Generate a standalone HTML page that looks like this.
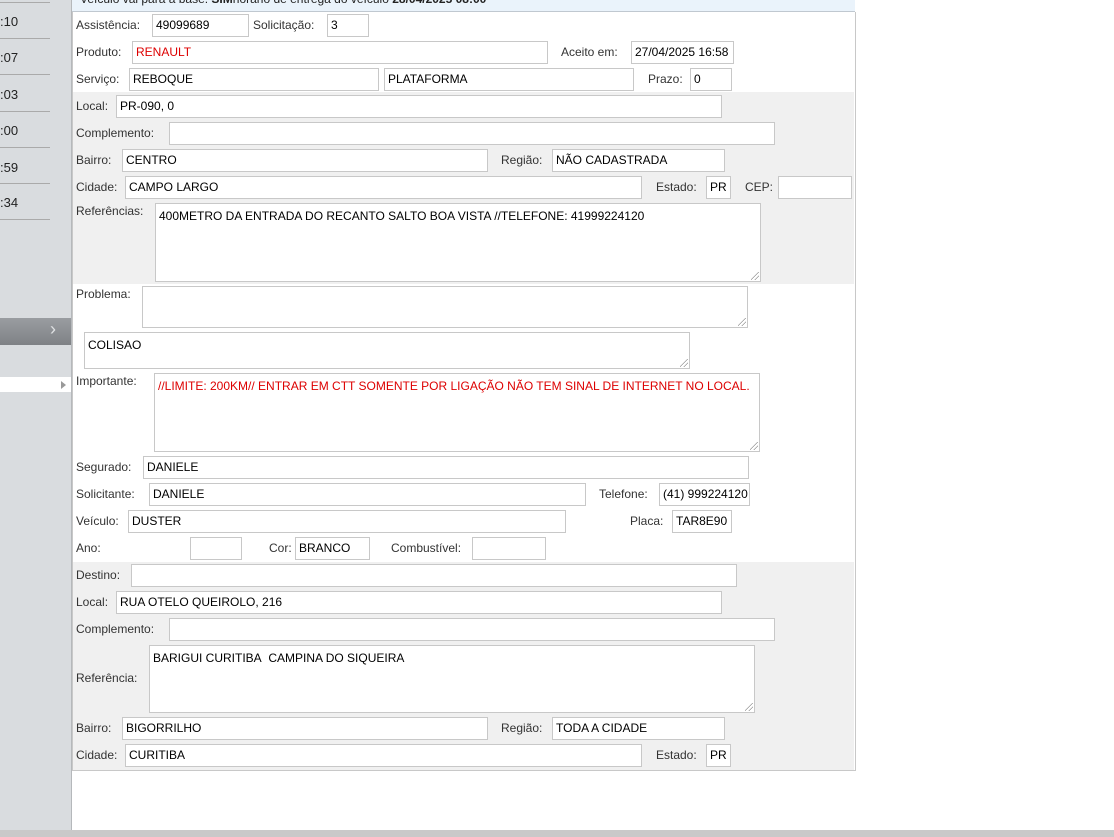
<!DOCTYPE html><html><head><meta charset="utf-8"><style>
body{margin:0;width:1114px;height:837px;position:relative;overflow:hidden;background:#fff;font-family:"Liberation Sans",sans-serif;font-size:12px;color:#333}
.a{position:absolute;white-space:nowrap}
.l{position:absolute;white-space:nowrap;line-height:14px;color:#333}
.i{position:absolute;background:#fff;border:1px solid #c8c8c8;box-sizing:border-box;color:#000;padding:3px 3px;line-height:14px;white-space:nowrap;overflow:hidden}
.t{white-space:normal;padding:5px 3px}
.sep{position:absolute;left:0;width:50px;height:1px;background:#aaa}
.tm{position:absolute;left:0;font-size:13px;color:#222}
.grip{position:absolute;width:8px;height:8px;right:1px;bottom:1px;background:linear-gradient(135deg,transparent 45%,#999 46%,#999 52%,transparent 53%,transparent 70%,#999 71%,#999 77%,transparent 78%)}
</style></head><body>
<div class="a" style="left:0;top:0;width:71px;height:830px;background:#d9dcdf;border-right:1px solid #b5b8bb"></div>
<div class="sep" style="top:2px"></div><div class="sep" style="top:38px"></div><div class="sep" style="top:74px"></div><div class="sep" style="top:111px"></div><div class="sep" style="top:147px"></div><div class="sep" style="top:183px"></div><div class="sep" style="top:219px"></div>
<div class="tm" style="top:14px">:10</div><div class="tm" style="top:50px">:07</div><div class="tm" style="top:87px">:03</div><div class="tm" style="top:123px">:00</div><div class="tm" style="top:160px">:59</div><div class="tm" style="top:195px">:34</div>
<div class="a" style="left:0;top:318px;width:71px;height:27px;background:linear-gradient(#9a9da1,#7e8185)"></div>
<div class="a" style="left:50px;top:319px;color:#dfe1e3;font-size:18px">›</div>
<div class="a" style="left:0;top:377px;width:71px;height:15px;background:#fff"></div>
<div class="a" style="left:61px;top:381px;width:0;height:0;border-left:5px solid #999;border-top:4px solid transparent;border-bottom:4px solid transparent"></div>
<div class="a" style="left:0;top:830px;width:1114px;height:7px;background:#c9c9c9"></div>

<div class="a" style="left:72px;top:0;width:783px;height:11px;background:#eaf3fb;border-bottom:1px solid #c0c8d0;overflow:hidden"><div style="position:absolute;left:8px;top:-8px;font-size:12px;color:#222">Veículo vai para a base: <b>SIM</b>horário de entrega do veículo <b>28/04/2025 08:00</b></div></div>
<div class="a" style="left:72px;top:12px;width:782px;height:758px;border:1px solid #c8c8c8;border-top:none;box-sizing:content-box;background:#fff"></div>
<div class="a" style="left:73px;top:92px;width:781px;height:192px;background:#f0f0f0"></div>
<div class="a" style="left:73px;top:562px;width:781px;height:208px;background:#f0f0f0"></div>

<div class="l" style="left:76px;top:18px">Assistência:</div><div class="i" style="left:152px;top:14px;width:97px;height:23px">49099689</div>
<div class="l" style="left:253px;top:18px">Solicitação:</div><div class="i" style="left:327px;top:14px;width:42px;height:23px">3</div>
<div class="l" style="left:76px;top:45px">Produto:</div><div class="i" style="left:132px;top:41px;width:416px;height:23px;color:#d00">RENAULT</div>
<div class="l" style="left:561px;top:45px">Aceito em:</div><div class="i" style="left:631px;top:41px;width:103px;height:23px">27/04/2025 16:58</div>
<div class="l" style="left:76px;top:72px">Serviço:</div><div class="i" style="left:129px;top:68px;width:250px;height:23px">REBOQUE</div>
<div class="i" style="left:384px;top:68px;width:250px;height:23px">PLATAFORMA</div>
<div class="l" style="left:648px;top:72px">Prazo:</div><div class="i" style="left:690px;top:68px;width:42px;height:23px">0</div>

<div class="l" style="left:76px;top:99px">Local:</div><div class="i" style="left:116px;top:95px;width:606px;height:23px">PR-090, 0</div>
<div class="l" style="left:76px;top:126px">Complemento:</div><div class="i" style="left:169px;top:122px;width:606px;height:23px"></div>
<div class="l" style="left:76px;top:153px">Bairro:</div><div class="i" style="left:122px;top:149px;width:366px;height:23px">CENTRO</div>
<div class="l" style="left:501px;top:153px">Região:</div><div class="i" style="left:552px;top:149px;width:173px;height:23px">NÃO CADASTRADA</div>
<div class="l" style="left:76px;top:180px">Cidade:</div><div class="i" style="left:125px;top:176px;width:517px;height:23px">CAMPO LARGO</div>
<div class="l" style="left:656px;top:180px">Estado:</div><div class="i" style="left:706px;top:176px;width:25px;height:23px">PR</div>
<div class="l" style="left:745px;top:180px">CEP:</div><div class="i" style="left:778px;top:176px;width:74px;height:23px"></div>
<div class="l" style="left:76px;top:204px">Referências:</div><div class="i t" style="left:155px;top:203px;width:606px;height:79px">400METRO DA ENTRADA DO RECANTO SALTO BOA VISTA //TELEFONE: 41999224120<div class="grip"></div></div>

<div class="l" style="left:76px;top:287px">Problema:</div><div class="i t" style="left:142px;top:286px;width:606px;height:42px"><div class="grip"></div></div>
<div class="i t" style="left:84px;top:332px;width:606px;height:37px">COLISAO<div class="grip"></div></div>
<div class="l" style="left:76px;top:374px">Importante:</div><div class="i t" style="left:154px;top:373px;width:606px;height:79px;color:#d00">//LIMITE: 200KM// ENTRAR EM CTT SOMENTE POR LIGAÇÃO NÃO TEM SINAL DE INTERNET NO LOCAL.<div class="grip"></div></div>
<div class="l" style="left:76px;top:460px">Segurado:</div><div class="i" style="left:143px;top:456px;width:606px;height:23px">DANIELE</div>
<div class="l" style="left:76px;top:487px">Solicitante:</div><div class="i" style="left:149px;top:483px;width:437px;height:23px">DANIELE</div>
<div class="l" style="left:599px;top:487px">Telefone:</div><div class="i" style="left:659px;top:483px;width:91px;height:23px">(41) 999224120</div>
<div class="l" style="left:76px;top:514px">Veículo:</div><div class="i" style="left:128px;top:510px;width:438px;height:23px">DUSTER</div>
<div class="l" style="left:630px;top:514px">Placa:</div><div class="i" style="left:672px;top:510px;width:60px;height:23px">TAR8E90</div>
<div class="l" style="left:76px;top:541px">Ano:</div><div class="i" style="left:190px;top:537px;width:52px;height:23px"></div>
<div class="l" style="left:269px;top:541px">Cor:</div><div class="i" style="left:295px;top:537px;width:75px;height:23px">BRANCO</div>
<div class="l" style="left:391px;top:541px">Combustível:</div><div class="i" style="left:472px;top:537px;width:74px;height:23px"></div>

<div class="l" style="left:76px;top:568px">Destino:</div><div class="i" style="left:131px;top:564px;width:606px;height:23px"></div>
<div class="l" style="left:76px;top:595px">Local:</div><div class="i" style="left:116px;top:591px;width:606px;height:23px">RUA OTELO QUEIROLO, 216</div>
<div class="l" style="left:76px;top:622px">Complemento:</div><div class="i" style="left:169px;top:618px;width:606px;height:23px"></div>
<div class="l" style="left:76px;top:671px">Referência:</div><div class="i t" style="left:149px;top:645px;width:606px;height:68px">BARIGUI CURITIBA&nbsp; CAMPINA DO SIQUEIRA<div class="grip"></div></div>
<div class="l" style="left:76px;top:721px">Bairro:</div><div class="i" style="left:122px;top:717px;width:366px;height:23px">BIGORRILHO</div>
<div class="l" style="left:501px;top:721px">Região:</div><div class="i" style="left:552px;top:717px;width:173px;height:23px">TODA A CIDADE</div>
<div class="l" style="left:76px;top:748px">Cidade:</div><div class="i" style="left:125px;top:744px;width:517px;height:23px">CURITIBA</div>
<div class="l" style="left:656px;top:748px">Estado:</div><div class="i" style="left:706px;top:744px;width:25px;height:23px">PR</div>
</body></html>
